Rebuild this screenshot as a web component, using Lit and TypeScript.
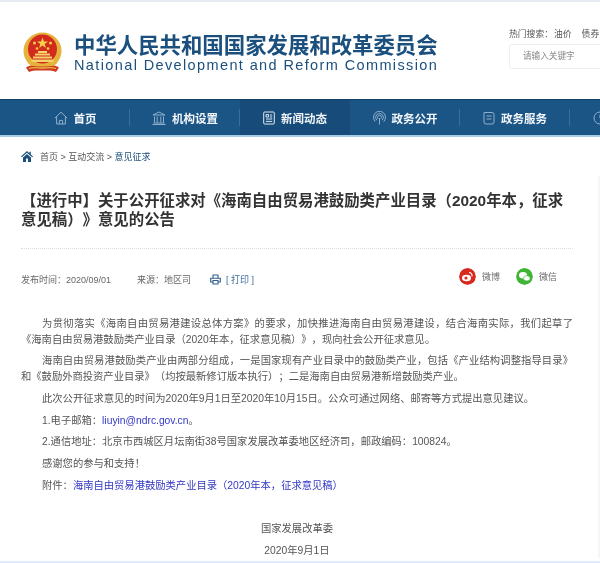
import { LitElement, html, css } from "lit";
import { customElement } from "lit/decorators.js";

const stroke = "#8fb0cc";
const icons = {
  home: html`<svg width="14" height="14" viewBox="0 0 14 14" fill="none" stroke="${stroke}" stroke-width="1"><path d="M.8 7.200 7 1.200l6.200 6M2.600 6v7h8.800V6M5.400 13V9.400h3.200V13"/></svg>`,
  bank: html`<svg width="14" height="14" viewBox="0 0 14 14" fill="none" stroke="${stroke}" stroke-width="1"><path d="M1 4 7 1l6 3zM2.500 5.500v6M5.200 5.500v6M8.800 5.500v6M11.500 5.500v6M1.500 12h11M.5 13.500h13"/></svg>`,
  news: html`<svg width="12" height="14" viewBox="0 0 12 14" fill="none" stroke="#dfe9f2" stroke-width="1"><rect x=".7" y="1" width="10.600" height="12" rx="1"/><path d="M3 3.600h2.600V6H3zM7 4h2.200M7 6h2.200M3 8h6.200M3 10.400h6.200"/></svg>`,
  radar: html`<svg width="13" height="14" viewBox="0 0 13 14" fill="none" stroke="${stroke}" stroke-width="1"><path d="M2.200 10.500a6 6 0 1 1 8.600 0M3.800 9.200a3.900 3.900 0 1 1 5.400 0M5.200 7.800a2 2 0 1 1 2.600 0M6.500 7v6.500"/></svg>`,
  doc: html`<svg width="12" height="14" viewBox="0 0 12 14" fill="none" stroke="${stroke}" stroke-width="1"><path d="M1 1.500h8a2 2 0 0 1 2 2V11a2 2 0 0 1-2 2H3a2 2 0 0 1-2-2zM3.500 5h5M3.500 8h5"/></svg>`,
  clock: html`<svg width="14" height="14" viewBox="0 0 14 14" fill="none" stroke="${stroke}" stroke-width="1"><circle cx="7" cy="7" r="6"/><path d="M7 3.500V7h3"/></svg>`,
};
const navItems = [
  ["首页", icons.home],
  ["机构设置", icons.bank],
  ["新闻动态", icons.news],
  ["政务公开", icons.radar],
  ["政务服务", icons.doc],
] as const;

@customElement("app-root")
export class AppRoot extends LitElement {
  static styles = css`
    :host {
      display: block; width: 600px; height: 563px; overflow: hidden; background: #fff;
      font-family: "Liberation Sans", "Noto Sans CJK SC", sans-serif; color: #555;
      border-top: 2px solid #e8ebf3; box-sizing: border-box; position: relative;
      text-spacing-trim: space-all;
    }
    header, .crumb, main { filter: blur(0.3px); }
    .item > * { filter: blur(0.2px); }
    header { height: 97px; display: flex; box-sizing: border-box; padding: 29px 0 0 22px; position: relative; }
    .emblem { width: 41px; height: 43px; flex: none; margin-right: 11px; }
    .brand { width: 366px; flex: none; color: #1b4f7d; margin-top: 3px; }
    .cn { font-size: 21.4px; line-height: 24px; font-weight: 700; white-space: nowrap; }
    .en { font-size: 14.5px; line-height: 16px; letter-spacing: 1.38px; white-space: nowrap; margin-top: -1.500px; }
    .tools { margin-left: 69px; width: 120px; flex: none; margin-top: -3px; }
    .hot { font-size: 8.8px; line-height: 12px; color: #555; white-space: nowrap; }
    .hot span { margin-left: 10px; }
    .hot span:first-child { margin-left: 1px; }
    .search { margin-top: 4px; height: 25px; width: 120px; box-sizing: border-box; border: 1px solid #eceef1; border-radius: 3px; font-size: 8.6px; line-height: 23px; color: #888; padding-left: 13px; }
    nav { height: 38px; box-sizing: border-box; background: #1b5586; border-top: 1px solid #123f66; border-bottom: 2px solid #a6cbe6; display: flex; padding-left: 20px; overflow: hidden; }
    .item { width: 110px; flex: none; display: flex; align-items: center; justify-content: center; gap: 6px; position: relative; font-size: 11.5px; font-weight: 700; color: #f2f6fa; white-space: nowrap; }
    .item svg { display: block; flex: none; }
    .item::after { content: ""; position: absolute; right: 0; top: 9px; bottom: 9px; width: 1px; background: #3a6f9c; }
    .item.active { background: #174b79; }
    .item.active::after { display: none; }
    .item.last { justify-content: flex-start; padding-left: 23px; box-sizing: border-box; }
    .crumb { height: 39px; display: flex; align-items: center; padding-left: 21px; font-size: 9px; color: #555; white-space: nowrap; }
    .crumb svg { margin-right: 7px; }
    .crumb b { font-weight: 400; color: #1b4f7d; }
    main { padding: 0 0 0 21px; border-right: 2px solid #f6f6f6; width: 577px; }
    .title-wrap { padding-top: 9px; }
    h1 { margin: 0; padding-top: 6px; width: 552px; height: 64px; box-sizing: border-box; font-size: 15.4px; line-height: 19px; font-weight: 700; color: #333; white-space: nowrap; border-bottom: 1px dotted #ddd; }
    .meta { width: 552px; height: 60px; display: flex; align-items: center; font-size: 9px; color: #666; white-space: nowrap; }
    .date { width: 116px; }
    .src { width: 73px; }
    .print { display: flex; align-items: center; gap: 5px; color: #3b6b99; }
    .share { margin-left: auto; display: flex; align-items: center; padding-right: 16px; margin-top: -6px; }
    .share .ic { width: 17px; height: 17px; border-radius: 50%; display: block; }
    .share span { margin: 0 16px 0 6px; color: #666; }
    .share span:last-child { margin-right: 0; }
    .article { width: 552px; font-size: 10.3px; line-height: 15.7px; color: #555; text-align: justify; padding-top: 7px; }
    .article p { margin: 0 0 6px; text-indent: 21px; }
    .article p.c { text-indent: 0; text-align: center; }
    a { color: #3238c4; text-decoration: none; }
    .foot { position: absolute; left: 0; right: 0; bottom: 0; height: 2px; background: #dfeafa; }
  `;

  render() {
    return html`
      <header>
        <svg class="emblem" viewBox="0 0 41 42">
          <path d="M20.500 1C30.500 1 39.500 9 39.500 19c0 6-2.600 10.500-6 14L31 35.500H10L7.500 33C4 29.500 1.500 25 1.500 19 1.500 9 10.500 1 20.500 1z" fill="#e5b33c"/>
          <circle cx="20.500" cy="17.500" r="14.500" fill="#d32a1e"/>
          <path d="M4 36c4-3.500 8-1 16.500-1S33 32.500 37 36l-3 4.500c-4-2-8-1.500-13.500-1.500s-9.500-.5-13.500 1.500z" fill="#cf3a24"/>
          <path d="M7 37c5-1.500 9-.5 13.500-.5S29 35.500 34 37" fill="none" stroke="#e9b93f" stroke-width="1.300"/>
          <polygon points="20.500,6 21.900,10 26,10 22.700,12.500 23.900,16.500 20.500,14 17.100,16.500 18.300,12.500 15,10 19.100,10" fill="#f6d24a"/>
          <circle cx="12.500" cy="11.500" r="1.500" fill="#f6d24a"/><circle cx="28.500" cy="11.500" r="1.500" fill="#f6d24a"/>
          <circle cx="15" cy="17" r="1.300" fill="#f6d24a"/><circle cx="26" cy="17" r="1.300" fill="#f6d24a"/>
          <path d="M13 22h15v2H13zM11 25h19v2H11zM9.500 28h22v2.500h-22z" fill="#f3d36a"/>
          <rect x="16" y="19.500" width="9" height="2" fill="#f3d36a"/>
        </svg>
        <div class="brand">
          <div class="cn">中华人民共和国国家发展和改革委员会</div>
          <div class="en">National Development and Reform Commission</div>
        </div>
        <div class="tools">
          <div class="hot">热门搜索&#xFF1A;<span>油价</span><span>债券</span></div>
          <div class="search">请输入关键字</div>
        </div>
      </header>
      <nav>
        ${navItems.map(([t, ic], i) => html`<div class="item ${i === 2 ? "active" : ""}">${ic}<span>${t}</span></div>`)}
        <div class="item last">${icons.clock}</div>
      </nav>
      <div class="crumb">
        <svg width="12" height="11" viewBox="0 0 12 11"><path d="M6 0 0 5.400l.8.800L6 1.700l5.200 4.500.8-.800L9.800 3.500V.8H8.400V2.200zM2 6.400V11h3V7.600h2V11h3V6.400L6 2.900z" fill="#1b4f7d"/></svg>
        首页 &gt; 互动交流 &gt;&nbsp;<b>意见征求</b>
      </div>
      <main>
        <div class="title-wrap">
          <h1>【进行中】关于公开征求对《海南自由贸易港鼓励类产业目录&#xFF08;2020年本&#xFF0C;征求<br>意见稿&#xFF09;》意见的公告</h1>
        </div>
        <div class="meta">
          <div class="date">发布时间&#xFF1A;2020/09/01</div>
          <div class="src">来源&#xFF1A;地区司</div>
          <div class="print">
            <svg width="11" height="11" viewBox="0 0 11 11" fill="none" stroke="#2f5f8e" stroke-width="1.100"><path d="M3 4V1h5v3M2.500 8H.7V4.200h9.600V8H8.500M3 6.500h5V10H3z"/></svg>
            <span>[ 打印 ]</span>
          </div>
          <div class="share">
            <svg class="ic" viewBox="0 0 17 17"><circle cx="8.500" cy="8.500" r="8.500" fill="#d9281e"/><ellipse cx="7.500" cy="10" rx="4.500" ry="3.300" fill="#fff"/><circle cx="7" cy="10" r="1.600" fill="#d9281e"/><path d="M10 4.500c2 0 3.500 1.500 3 4" fill="none" stroke="#fff" stroke-width="1.100"/></svg>
            <span>微博</span>
            <svg class="ic" viewBox="0 0 17 17"><circle cx="8.500" cy="8.500" r="8.500" fill="#3fb435"/><ellipse cx="7" cy="7.300" rx="4" ry="3.200" fill="#fff"/><ellipse cx="10.800" cy="10.300" rx="3.300" ry="2.600" fill="#fff" stroke="#3fb435" stroke-width=".6"/></svg>
            <span>微信</span>
          </div>
        </div>
        <div class="article">
          <p>为贯彻落实《海南自由贸易港建设总体方案》的要求&#xFF0C;加快推进海南自由贸易港建设&#xFF0C;结合海南实际&#xFF0C;我们起草了《海南自由贸易港鼓励类产业目录&#xFF08;2020年本&#xFF0C;征求意见稿&#xFF09;》&#xFF0C;现向社会公开征求意见。</p>
          <p>海南自由贸易港鼓励类产业由两部分组成&#xFF0C;一是国家现有产业目录中的鼓励类产业&#xFF0C;包括《产业结构调整指导目录》和《鼓励外商投资产业目录》&#xFF08;均按最新修订版本执行&#xFF09;&#xFF1B;二是海南自由贸易港新增鼓励类产业。</p>
          <p>此次公开征求意见的时间为2020年9月1日至2020年10月15日。公众可通过网络、邮寄等方式提出意见建议。</p>
          <p>1.电子邮箱&#xFF1A;<a>liuyin@ndrc.gov.cn</a>。</p>
          <p>2.通信地址&#xFF1A;北京市西城区月坛南街38号国家发展改革委地区经济司&#xFF0C;邮政编码&#xFF1A;100824。</p>
          <p>感谢您的参与和支持&#xFF01;</p>
          <p>附件&#xFF1A;<a>海南自由贸易港鼓励类产业目录&#xFF08;2020年本&#xFF0C;征求意见稿&#xFF09;</a></p>
          <p>&nbsp;</p>
          <p class="c">国家发展改革委</p>
          <p class="c">2020年9月1日</p>
        </div>
      </main>
      <div class="foot"></div>
    `;
  }
}
